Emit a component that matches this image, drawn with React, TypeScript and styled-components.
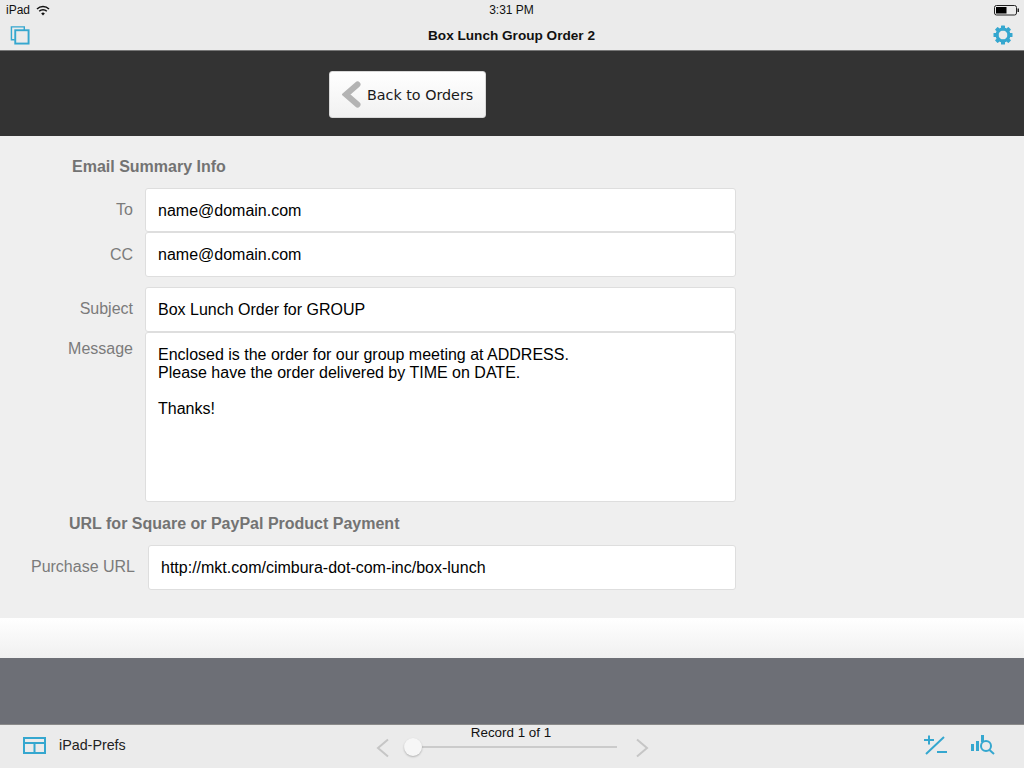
import React from 'react';
import styled, { createGlobalStyle } from 'styled-components';

const GlobalStyle = createGlobalStyle`
  html, body {
    margin: 0;
    padding: 0;
    background: #efefef;
    font-family: "Liberation Sans", Arial, sans-serif;
  }
  * { box-sizing: border-box; }
`;

const Page = styled.div`
  width: 1024px;
  height: 768px;
  display: flex;
  flex-direction: column;
  overflow: hidden;
`;

const TopChrome = styled.header`
  height: 51px;
  background: #ebebeb;
  border-bottom: 1px solid #777;
  display: flex;
  flex-direction: column;
`;

const StatusBar = styled.div`
  height: 20px;
  padding: 0 5px 0 6px;
  display: grid;
  grid-template-columns: 1fr auto 1fr;
  align-items: center;
  font-size: 12px;
  color: #111;
`;

const StatusLeft = styled.div`
  display: flex;
  align-items: center;
  gap: 6px;
`;

const StatusTime = styled.div`
  font-size: 12px;
  margin-right: 2px;
`;

const StatusRight = styled.div`
  display: flex;
  justify-content: flex-end;
`;

const TitleBar = styled.div`
  height: 30px;
  padding: 0 11px 0 10px;
  display: flex;
  align-items: center;
  justify-content: space-between;
`;

const Title = styled.div`
  flex: 1;
  text-align: center;
  font-size: 13.6px;
  font-weight: 700;
  color: #111;
  padding-top: 1px;
`;

const DarkBand = styled.div`
  height: 85px;
  background: #333333;
  padding: 20px 0 0 329px;
`;

const BackButton = styled.button`
  width: 157px;
  height: 47px;
  padding: 0 0 0 12px;
  display: flex;
  align-items: center;
  gap: 6px;
  border: 1px solid #d8d8d8;
  border-radius: 3px;
  background: linear-gradient(#ffffff, #f1f1f1);
  font-family: "DejaVu Sans", sans-serif;
  font-size: 14.3px;
  color: #1a1a1a;
`;

const Form = styled.main`
  height: 482px;
  background: #efefef;
  padding-top: 21px;
`;

const SectionHeading = styled.h2<{ $left: number; $top?: number }>`
  margin: ${({ $top }) => $top ?? 0}px 0 0 ${({ $left }) => $left}px;
  height: 20px;
  line-height: 20px;
  font-size: 16px;
  font-weight: 700;
  color: #737373;
`;

const Row = styled.div<{ $top?: number; $gutter?: number }>`
  margin-top: ${({ $top }) => $top ?? 0}px;
  display: grid;
  grid-template-columns: ${({ $gutter }) => $gutter ?? 145}px ${({ $gutter }) => 736 - ($gutter ?? 145)}px;
`;

const Label = styled.div<{ $offset?: number; $right?: number }>`
  padding: ${({ $offset }) => $offset ?? 12}px ${({ $right }) => $right ?? 12}px 0 0;
  text-align: right;
  font-size: 16px;
  line-height: 20px;
  color: #7b7b7b;
`;

const Field = styled.div<{ $height: number }>`
  height: ${({ $height }) => $height}px;
  padding: 13px 12px 0;
  background: #ffffff;
  border: 1px solid #dedede;
  border-radius: 3px;
  font-size: 16px;
  line-height: 18px;
  color: #000000;
  white-space: pre-line;
`;

const Gradient = styled.div`
  height: 40px;
  background: linear-gradient(#ffffff, #f0f0f0);
`;

const GreyBand = styled.div`
  height: 66px;
  background: #6d6f76;
`;

const BottomBar = styled.footer`
  height: 44px;
  padding-bottom: 3px;
  background: #ebebeb;
  border-top: 1px solid #8a8a8a;
  display: grid;
  grid-template-columns: 360px 1fr 360px;
  align-items: center;
`;

const LayoutLink = styled.div`
  display: flex;
  align-items: center;
  gap: 13px;
  padding-left: 23px;
  font-size: 14.3px;
  color: #222;
`;

const Pager = styled.div`
  align-self: start;
  display: flex;
  flex-direction: column;
  align-items: center;
`;

const RecordText = styled.div`
  height: 18px;
  line-height: 18px;
  margin: -1px 2px 0 0;
  font-size: 13.4px;
  color: #111;
`;

const PagerRow = styled.div`
  display: flex;
  align-items: center;
  height: 20px;
  margin: -4px 0 0 1px;
`;

const Track = styled.div`
  width: 213px;
  height: 2px;
  margin: -2px 18px 0 14px;
  background: #cbcbcb;
  position: relative;
`;

const Thumb = styled.div`
  position: absolute;
  left: 0;
  top: -8px;
  width: 18px;
  height: 18px;
  border-radius: 50%;
  background: #f6f6f6;
  box-shadow: 0 1px 2px rgba(0, 0, 0, 0.25);
`;

const ToolIcons = styled.div`
  display: flex;
  justify-content: flex-end;
  align-items: center;
  gap: 23px;
  padding-right: 28px;
`;

const blue = '#35a7cf';

const Wifi = () => (
  <svg width="14" height="11" viewBox="0 0 14 11" fill="none" stroke="#111" strokeWidth="1.5">
    <path d="M1 4a8.5 8.5 0 0 1 12 0" />
    <path d="M3.2 6.3a5.4 5.4 0 0 1 7.6 0" />
    <path d="M7 10.5 5.2 8.4a2.6 2.6 0 0 1 3.6 0z" fill="#111" stroke="none" />
  </svg>
);

const Battery = () => (
  <svg width="25" height="11" viewBox="0 0 25 11">
    <rect x="0.5" y="0.5" width="22" height="9.5" rx="2" fill="none" stroke="#222" />
    <rect x="2" y="2" width="10.5" height="6.5" fill="#000" />
    <rect x="23.5" y="3.5" width="1.5" height="3.5" fill="#222" />
  </svg>
);

const CopyIcon = () => (
  <svg width="20" height="20" viewBox="0 0 21 20" fill="none" stroke={blue} strokeWidth="2">
    <rect x="5.5" y="5" width="14" height="14" />
    <path d="M5 15H1.5V1.5H15V5" strokeWidth="1.5" />
  </svg>
);

const GearIcon = () => (
  <svg width="20" height="20" viewBox="0 0 20 20">
    <g fill={blue}>
      {[0, 45, 90, 135, 180, 225, 270, 315].map(a => (
        <rect key={a} x="8" y="0.5" width="4" height="5" rx="0.6" transform={`rotate(${a} 10 10)`} />
      ))}
    </g>
    <circle cx="10" cy="10" r="6" fill="none" stroke={blue} strokeWidth="3" />
  </svg>
);

const Chevron = () => (
  <svg width="19" height="27" viewBox="0 0 19 27" fill="none" stroke="#b4b4b4" strokeWidth="6" strokeLinecap="round">
    <path d="M15.5 3.5 4 13.5l11.5 10" />
  </svg>
);

const TableIcon = () => (
  <svg width="23" height="17" viewBox="0 0 23 17" fill="none" stroke={blue} strokeWidth="2">
    <rect x="1" y="1" width="21" height="15" />
    <path d="M1 6h21M11.5 6v10" />
  </svg>
);

const PagerArrow = ({ flip }: { flip?: boolean }) => (
  <svg width="14" height="20" viewBox="0 0 14 20" fill="none" stroke="#c6c6c6" strokeWidth="2">
    <path d={flip ? 'M2 1.5 12 10 2 18.5' : 'M12 1.5 2 10l10 8.5'} />
  </svg>
);

const PlusMinusIcon = () => (
  <svg width="25" height="20" viewBox="0 0 25 20" fill="none" stroke={blue} strokeWidth="2">
    <path d="M1 5h10M6 0.5v9M3 19 21 2M14 17h10" />
  </svg>
);

const FindIcon = () => (
  <svg width="25" height="20" viewBox="0 0 25 20" fill="none" stroke={blue}>
    <path d="M1.5 9v7M6.5 6v10M11.5 0v7" strokeWidth="3" />
    <circle cx="15" cy="11" r="5" strokeWidth="2" />
    <path d="m18.5 15 4.5 4" strokeWidth="2" />
  </svg>
);

const messageText = `Enclosed is the order for our group meeting at ADDRESS.
Please have the order delivered by TIME on DATE.

Thanks!`;

export default function App() {
  return (
    <Page>
      <GlobalStyle />
      <TopChrome>
        <StatusBar>
          <StatusLeft>
            <span>iPad</span>
            <Wifi />
          </StatusLeft>
          <StatusTime>3:31 PM</StatusTime>
          <StatusRight>
            <Battery />
          </StatusRight>
        </StatusBar>
        <TitleBar>
          <CopyIcon />
          <Title>Box Lunch Group Order 2</Title>
          <GearIcon />
        </TitleBar>
      </TopChrome>
      <DarkBand>
        <BackButton>
          <Chevron />
          Back to Orders
        </BackButton>
      </DarkBand>
      <Form>
        <SectionHeading $left={72}>Email Summary Info</SectionHeading>
        <Row $top={11}>
          <Label>To</Label>
          <Field $height={44}>name@domain.com</Field>
        </Row>
        <Row>
          <Label $offset={13}>CC</Label>
          <Field $height={45}>name@domain.com</Field>
        </Row>
        <Row $top={10}>
          <Label>Subject</Label>
          <Field $height={45}>Box Lunch Order for GROUP</Field>
        </Row>
        <Row>
          <Label $offset={7}>Message</Label>
          <Field $height={170}>{messageText}</Field>
        </Row>
        <SectionHeading $left={69} $top={12}>URL for Square or PayPal Product Payment</SectionHeading>
        <Row $top={11} $gutter={148}>
          <Label $offset={12} $right={13}>Purchase URL</Label>
          <Field $height={45}>http://mkt.com/cimbura-dot-com-inc/box-lunch</Field>
        </Row>
      </Form>
      <Gradient />
      <GreyBand />
      <BottomBar>
        <LayoutLink>
          <TableIcon />
          iPad-Prefs
        </LayoutLink>
        <Pager>
          <RecordText>Record 1 of 1</RecordText>
          <PagerRow>
            <PagerArrow />
            <Track>
              <Thumb />
            </Track>
            <PagerArrow flip />
          </PagerRow>
        </Pager>
        <ToolIcons>
          <PlusMinusIcon />
          <FindIcon />
        </ToolIcons>
      </BottomBar>
    </Page>
  );
}
